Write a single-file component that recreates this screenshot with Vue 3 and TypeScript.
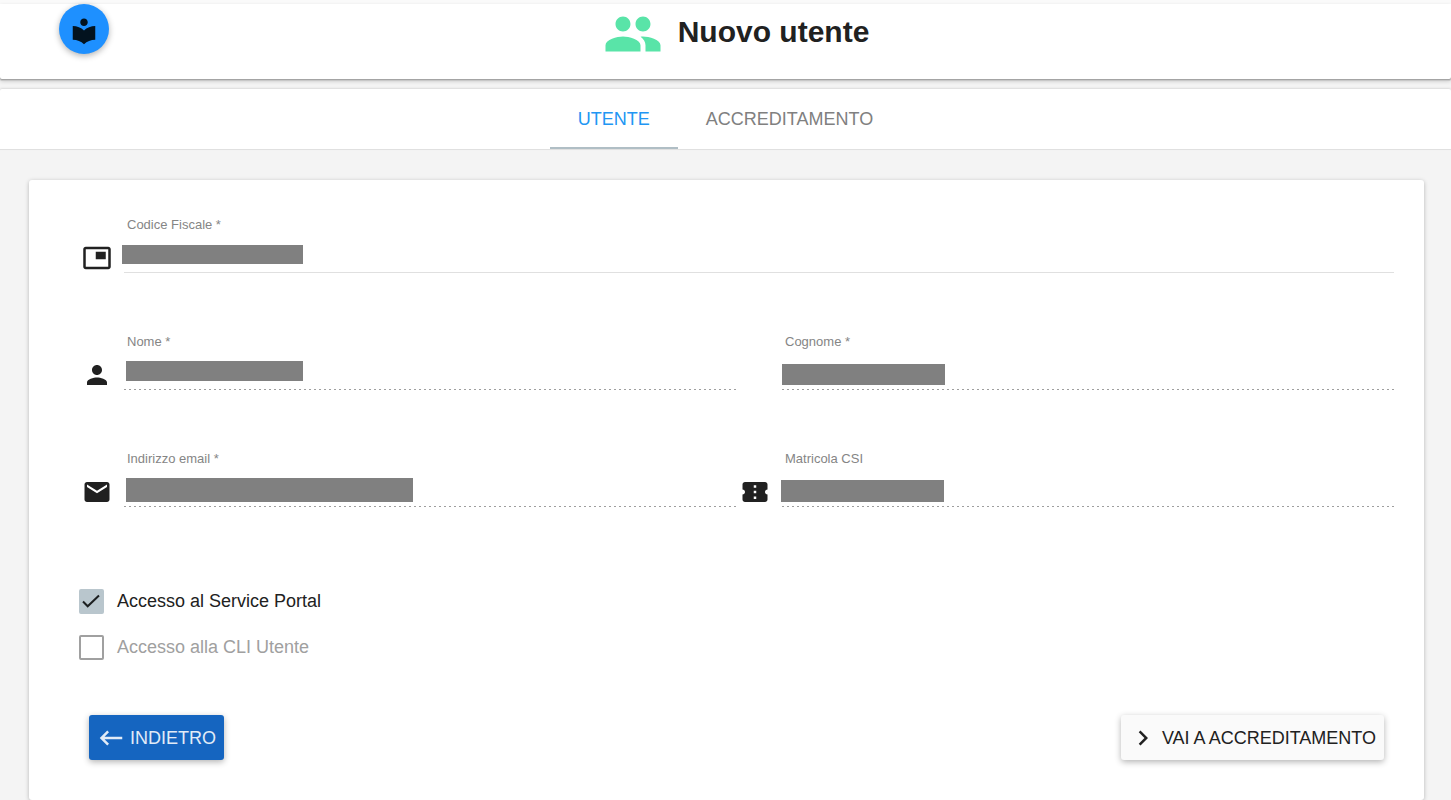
<script setup lang="ts">
import { ref } from 'vue'

interface Mask {
  left: number
  bottom: number
  width: number
  height: number
}

interface Field {
  id: string
  label: string
  icon?: string
  wide?: boolean
  disabled: boolean
  mask: Mask
}

interface Tab {
  id: string
  label: string
}

const icons = {
  card: 'M19 7h-8v6h8V7zm2-4H3c-1.1 0-2 .9-2 2v14c0 1.1.9 1.98 2 1.98h18c1.1 0 2-.88 2-1.98V5c0-1.1-.9-2-2-2zm0 16.01H3V4.98h18v14.03z',
  person:
    'M12 12c2.21 0 4-1.79 4-4s-1.79-4-4-4-4 1.79-4 4 1.79 4 4 4zm0 2c-2.67 0-8 1.34-8 4v2h16v-2c0-2.66-5.33-4-8-4z',
  email:
    'M20 4H4c-1.1 0-1.99.9-1.99 2L2 18c0 1.1.9 2 2 2h16c1.1 0 2-.9 2-2V6c0-1.1-.9-2-2-2zm0 4l-8 5-8-5V6l8 5 8-5v2z',
  ticket:
    'M22 10V6c0-1.11-.9-2-2-2H4c-1.1 0-1.99.89-1.99 2v4c1.1 0 1.99.9 1.99 2s-.89 2-2 2v4c0 1.1.9 2 2 2h16c1.1 0 2-.9 2-2v-4c-1.1 0-2-.9-2-2s.9-2 2-2zm-9 7.5h-2v-2h2v2zm0-4.5h-2v-2h2v2zm0-4.5h-2v-2h2v2z',
}

const tabs: Tab[] = [
  { id: 'utente', label: 'UTENTE' },
  { id: 'accreditamento', label: 'ACCREDITAMENTO' },
]
const activeTab = ref<string>('utente')

const fields: Field[] = [
  {
    id: 'codice-fiscale',
    label: 'Codice Fiscale *',
    icon: icons.card,
    wide: true,
    disabled: false,
    mask: { left: -2, bottom: 9, width: 181, height: 19 },
  },
  {
    id: 'nome',
    label: 'Nome *',
    icon: icons.person,
    disabled: true,
    mask: { left: 2, bottom: 9, width: 177, height: 20 },
  },
  {
    id: 'cognome',
    label: 'Cognome *',
    disabled: true,
    mask: { left: 0, bottom: 5, width: 163, height: 21 },
  },
  {
    id: 'email',
    label: 'Indirizzo email *',
    icon: icons.email,
    disabled: true,
    mask: { left: 2, bottom: 5, width: 287, height: 24 },
  },
  {
    id: 'matricola',
    label: 'Matricola CSI',
    icon: icons.ticket,
    disabled: true,
    mask: { left: -1, bottom: 5, width: 163, height: 22 },
  },
]

const servicePortal = ref(true)
const cliUtente = ref(false)

function maskStyle(mask: Mask) {
  return {
    left: `${mask.left}px`,
    bottom: `${mask.bottom}px`,
    width: `${mask.width}px`,
    height: `${mask.height}px`,
  }
}
</script>

<template>
  <div class="page">
    <header class="header">
      <button class="fab" type="button" aria-label="Guida">
        <svg class="icon" viewBox="0 0 24 24" aria-hidden="true">
          <path
            d="M12 11.55C9.64 9.35 6.48 8 3 8v11c3.48 0 6.64 1.35 9 3.55 2.36-2.19 5.52-3.55 9-3.55V8c-3.48 0-6.64 1.35-9 3.55zM12 8c1.66 0 3-1.34 3-3s-1.34-3-3-3-3 1.34-3 3 1.34 3 3 3z"
          />
        </svg>
      </button>
      <div class="heading">
        <svg class="heading-icon" viewBox="0 0 24 24" aria-hidden="true">
          <path
            d="M16 11c1.66 0 2.99-1.34 2.99-3S17.66 5 16 5c-1.66 0-3 1.34-3 3s1.34 3 3 3zm-8 0c1.66 0 2.99-1.34 2.99-3S9.66 5 8 5C6.34 5 5 6.34 5 8s1.34 3 3 3zm0 2c-2.33 0-7 1.17-7 3.5V19h14v-2.5c0-2.33-4.67-3.5-7-3.5zm8 0c-.29 0-.62.02-.97.05 1.16.84 1.97 1.97 1.97 3.45V19h6v-2.5c0-2.33-4.67-3.5-7-3.5z"
          />
        </svg>
        <h1>Nuovo utente</h1>
      </div>
    </header>

    <nav class="tabs" role="tablist">
      <button
        v-for="tab in tabs"
        :key="tab.id"
        class="tab"
        :class="{ active: tab.id === activeTab }"
        type="button"
        role="tab"
        :aria-selected="tab.id === activeTab"
        @click="activeTab = tab.id"
      >
        {{ tab.label }}
      </button>
    </nav>

    <main>
      <form class="card" @submit.prevent>
        <div class="fields">
          <div v-for="field in fields" :key="field.id" class="row" :class="{ wide: field.wide }">
            <svg class="icon" viewBox="0 0 24 24" aria-hidden="true">
              <path v-if="field.icon" :d="field.icon" />
            </svg>
            <div class="field" :class="{ disabled: field.disabled }">
              <label :for="field.id">{{ field.label }}</label>
              <input :id="field.id" type="text" autocomplete="off" :disabled="field.disabled" />
              <span class="mask" :style="maskStyle(field.mask)"></span>
            </div>
          </div>
        </div>

        <div class="checks">
          <label class="check">
            <span class="box">
              <input v-model="servicePortal" type="checkbox" />
              <svg v-if="servicePortal" viewBox="0 0 25 25" aria-hidden="true">
                <path d="M4 12.5l4.7 4.8L20 6.5" />
              </svg>
            </span>
            <span>Accesso al Service Portal</span>
          </label>
          <label class="check off">
            <span class="box">
              <input v-model="cliUtente" type="checkbox" disabled />
            </span>
            <span>Accesso alla CLI Utente</span>
          </label>
        </div>

        <div class="actions">
          <button class="btn primary" type="button">
            <svg class="icon" viewBox="0 0 24 24" aria-hidden="true">
              <path d="M21 11H6.83l3.58-3.59L9 6l-6 6 6 6 1.41-1.41L6.83 13H21z" />
            </svg>
            <span>INDIETRO</span>
          </button>
          <button class="btn" type="submit">
            <svg class="icon" viewBox="0 0 24 24" aria-hidden="true">
              <path d="M10 6L8.59 7.41 13.17 12l-4.58 4.59L10 18l6-6z" />
            </svg>
            <span>VAI A ACCREDITAMENTO</span>
          </button>
        </div>
      </form>
    </main>
  </div>
</template>

<style>
body {
  margin: 0;
  background: #f4f4f4;
}
</style>

<style scoped>
.page {
  box-sizing: border-box;
  min-height: 100vh;
  border-top: 4px solid #fafafa;
  color: #212121;
  font-family: 'Liberation Sans', Arial, sans-serif;
  font-size: 18px;
  line-height: 24px;
}

button {
  border: 0;
  padding: 0;
  color: inherit;
  font: inherit;
  cursor: pointer;
}

.icon {
  display: block;
  flex: none;
  width: 30px;
  height: 30px;
  fill: currentColor;
}

.header {
  display: grid;
  grid-template-columns: 1fr auto 1fr;
  align-items: start;
  padding: 0 38px 15px 59px;
  border-radius: 0 0 2px 2px;
  background: #fff;
  box-shadow: 0 1px 0 #a4a4a4, 0 2px 0 #c8c8c8, 0 2px 4px rgba(0, 0, 0, 0.2);
}

.fab {
  width: 50px;
  height: 50px;
  padding: 12px 10px 8px;
  border-radius: 50%;
  background: #1e90ff;
  box-shadow: 0 2px 6px rgba(0, 0, 0, 0.3);
  color: #03131f;
}

.heading {
  display: flex;
  align-items: flex-start;
  gap: 15px;
}

.heading-icon {
  width: 60px;
  height: 60px;
  fill: #59e4a8;
}

h1 {
  margin: 0;
  font-size: 30px;
  line-height: 56px;
}

.tabs {
  display: flex;
  justify-content: center;
  margin-top: 10px;
  border-bottom: 1px solid #e0e0e0;
  border-radius: 2px 2px 0 0;
  background: #fff;
  box-shadow: 0 -1px 2px rgba(0, 0, 0, 0.1);
}

.tab {
  padding: 18px 28px 16px;
  border-bottom: 2px solid transparent;
  background: none;
  color: #808080;
}

.tab.active {
  border-color: #b0bec5;
  color: #2196f3;
}

.card {
  margin: 30px 27px 0 29px;
  padding: 37px 30px 40px 53px;
  border-radius: 3px;
  background: #fff;
  box-shadow: 0 1px 4px rgba(0, 0, 0, 0.26);
}

.fields {
  display: grid;
  grid-template-columns: 1fr 1fr;
  gap: 61px 4px;
}

.row {
  display: flex;
  align-items: flex-end;
  gap: 12px;
}

.row.wide {
  grid-column: 1 / -1;
}

.field {
  position: relative;
  display: flex;
  flex: 1;
  flex-direction: column;
  min-width: 0;
}

.field label {
  padding-left: 3px;
  color: #858585;
  font-size: 13px;
  line-height: 16px;
}

.field input {
  width: 100%;
  height: 40px;
  box-sizing: border-box;
  padding: 0 3px;
  border: 0;
  border-bottom: 1px solid #e0e0e0;
  border-radius: 0;
  outline: 0;
  background: transparent;
  font: inherit;
}

.field.disabled input {
  border-bottom: 0;
  background: repeating-linear-gradient(to right, #9e9e9e 0 2px, transparent 2px 5px) bottom / 100% 1px no-repeat;
}

.mask {
  position: absolute;
  background: #808080;
  pointer-events: none;
}

.checks {
  display: grid;
  justify-items: start;
  gap: 21px;
  margin: 82px 0 0 -3px;
}

.check {
  display: flex;
  align-items: center;
  gap: 13px;
  line-height: 25px;
}

.check.off {
  color: #a0a0a0;
}

.box {
  position: relative;
  width: 25px;
  height: 25px;
}

.box input {
  display: block;
  width: 25px;
  height: 25px;
  margin: 0;
  border: 2px solid #a0a0a0;
  border-radius: 2px;
  appearance: none;
  background: #fff;
}

.box input:checked {
  border-color: #b9c6cd;
  background: #b9c6cd;
}

.box svg {
  position: absolute;
  inset: 0;
  fill: none;
  stroke: #1c1f20;
  stroke-width: 2;
  pointer-events: none;
}

.actions {
  display: flex;
  justify-content: space-between;
  margin: 55px 10px 0 7px;
}

.btn {
  display: flex;
  align-items: center;
  gap: 4px;
  height: 45px;
  padding: 0 8px 0 7px;
  border-radius: 3px;
  background: #fafafa;
  box-shadow: 0 2px 6px rgba(0, 0, 0, 0.3);
}

.btn.primary {
  background: #1565c0;
  color: #e1ebf7;
}
</style>
